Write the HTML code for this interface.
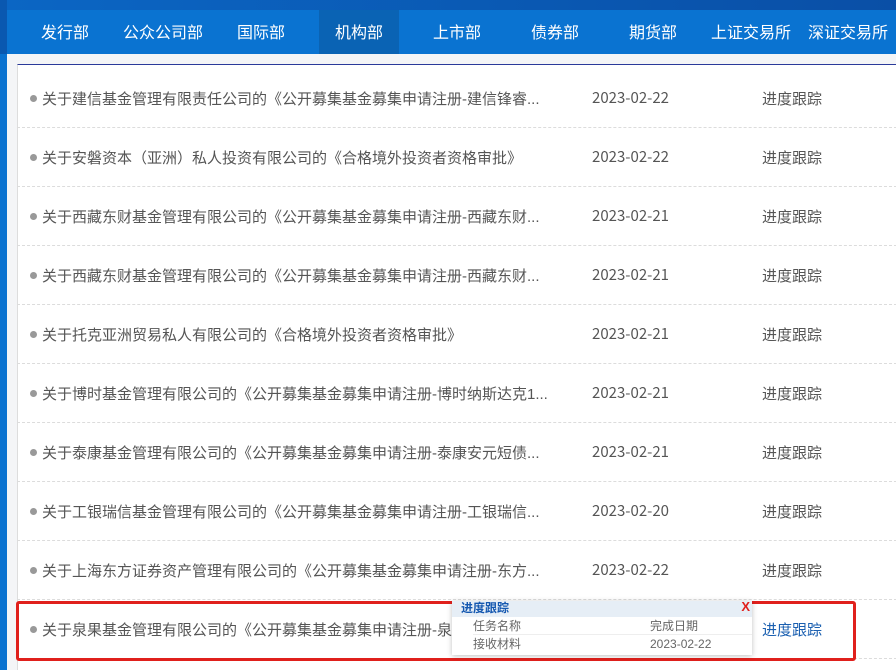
<!DOCTYPE html>
<html><head><meta charset="utf-8"><style>
*{margin:0;padding:0;box-sizing:border-box}
html,body{width:896px;height:670px;overflow:hidden}
body{background:#f4f5f7;font-family:"Liberation Sans","Noto Sans CJK SC",sans-serif;position:relative}
.top{position:absolute;left:0;top:0;width:896px;height:10px;background:linear-gradient(90deg,#0b66c4,#0a4fa6)}
.lstrip{position:absolute;left:0;top:0;width:7px;height:670px;background:#0a72d0}
.lstrip2{position:absolute;left:0;top:0;width:7px;height:54px;background:#0a58b0}
.nav{position:absolute;left:7px;top:10px;width:889px;height:44px;background:#0a73d1}
.nav span{position:absolute;top:0;height:44px;line-height:48px;color:#fff;font-size:16px;white-space:nowrap}
.nav .act{background:#0a63b4;text-align:center}
.panel{position:absolute;left:17px;top:64px;width:890px;height:620px;background:#fff;border-top:1px solid #2a3a9a;border-left:1px solid #ddd}
.row{position:absolute;left:17px;width:880px;height:59px;border-bottom:1px dashed #dcdcdc;font-size:15px;color:#555;line-height:59px}
.row .b{position:absolute;left:13px;top:26px;width:7px;height:7px;border-radius:50%;background:#999}
.row span{position:absolute;top:1px;white-space:nowrap;line-height:59px;height:59px}
.row .t{left:25px}
.row .d{left:575px;font-family:"Noto Sans CJK SC","Liberation Sans",sans-serif;top:-1px}
.row .l{left:745px}
.red{position:absolute;left:16px;top:601px;width:840px;height:60px;border:3px solid #e0201c;border-radius:3px}
.pop{position:absolute;left:452px;top:601px;width:300px;height:54px;background:#fff;box-shadow:0 1px 5px rgba(0,0,0,.25);font-size:12px;color:#666}
.pop .h{height:16px;background:#e6eef6;color:#1558b0;font-weight:bold;padding-left:9px;line-height:14px}
.pop .x{position:absolute;right:2px;top:-2px;color:#e0201c;font-weight:bold;font-size:13px}
.pop .r{position:absolute;left:21px;height:18px;line-height:18px;width:279px}
.pop .r span{position:absolute;left:177px}
</style></head><body>
<div class="top"></div>
<div class="lstrip"></div><div class="lstrip2"></div>
<div class="nav">
<span style="left:34px">发行部</span>
<span style="left:116px">公众公司部</span>
<span style="left:230px">国际部</span>
<span class="act" style="left:312px;width:80px">机构部</span>
<span style="left:426px">上市部</span>
<span style="left:524px">债券部</span>
<span style="left:622px">期货部</span>
<span style="left:704px">上证交易所</span>
<span style="left:801px">深证交易所</span>
</div>
<div class="panel"></div>
<div class="row" style="top:69px"><i class="b"></i><span class="t">关于建信基金管理有限责任公司的《公开募集基金募集申请注册-建信锋睿...</span><span class="d">2023-02-22</span><span class="l">进度跟踪</span></div>
<div class="row" style="top:128px"><i class="b"></i><span class="t">关于安磐资本（亚洲）私人投资有限公司的《合格境外投资者资格审批》</span><span class="d">2023-02-22</span><span class="l">进度跟踪</span></div>
<div class="row" style="top:187px"><i class="b"></i><span class="t">关于西藏东财基金管理有限公司的《公开募集基金募集申请注册-西藏东财...</span><span class="d">2023-02-21</span><span class="l">进度跟踪</span></div>
<div class="row" style="top:246px"><i class="b"></i><span class="t">关于西藏东财基金管理有限公司的《公开募集基金募集申请注册-西藏东财...</span><span class="d">2023-02-21</span><span class="l">进度跟踪</span></div>
<div class="row" style="top:305px"><i class="b"></i><span class="t">关于托克亚洲贸易私人有限公司的《合格境外投资者资格审批》</span><span class="d">2023-02-21</span><span class="l">进度跟踪</span></div>
<div class="row" style="top:364px"><i class="b"></i><span class="t">关于博时基金管理有限公司的《公开募集基金募集申请注册-博时纳斯达克1...</span><span class="d">2023-02-21</span><span class="l">进度跟踪</span></div>
<div class="row" style="top:423px"><i class="b"></i><span class="t">关于泰康基金管理有限公司的《公开募集基金募集申请注册-泰康安元短债...</span><span class="d">2023-02-21</span><span class="l">进度跟踪</span></div>
<div class="row" style="top:482px"><i class="b"></i><span class="t">关于工银瑞信基金管理有限公司的《公开募集基金募集申请注册-工银瑞信...</span><span class="d">2023-02-20</span><span class="l">进度跟踪</span></div>
<div class="row" style="top:541px"><i class="b"></i><span class="t">关于上海东方证券资产管理有限公司的《公开募集基金募集申请注册-东方...</span><span class="d">2023-02-22</span><span class="l">进度跟踪</span></div>
<div class="row" style="top:600px"><i class="b"></i><span class="t">关于泉果基金管理有限公司的《公开募集基金募集申请注册-泉果...</span><span class="l" style="color:#1a5fb0">进度跟踪</span></div>
<div class="red"></div>
<div class="pop"><div class="h">进度跟踪</div><span class="x">X</span>
<div class="r" style="top:16px;border-bottom:1px solid #eee">任务名称<span>完成日期</span></div>
<div class="r" style="top:34px">接收材料<span>2023-02-22</span></div>
</div>
</body></html>
